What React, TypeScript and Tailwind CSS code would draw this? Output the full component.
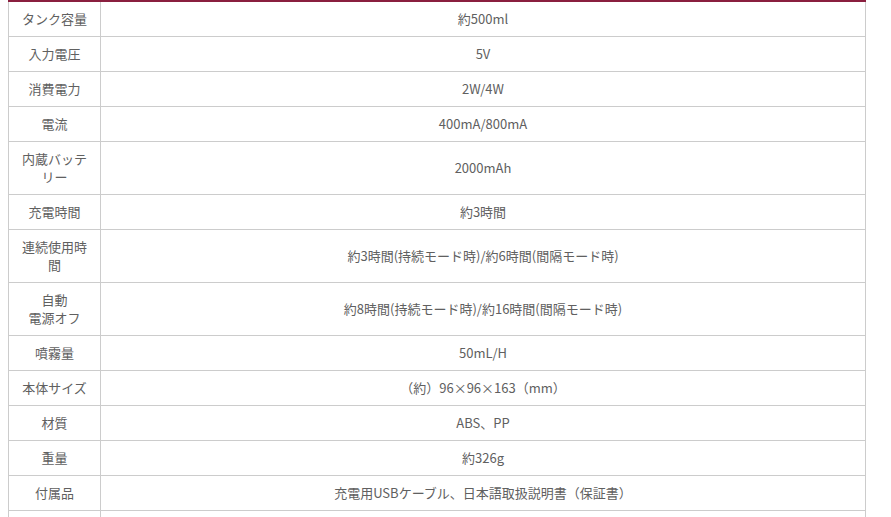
const rows: [string[], string][] = [
  [["タンク容量"], "約500ml"],
  [["入力電圧"], "5V"],
  [["消費電力"], "2W/4W"],
  [["電流"], "400mA/800mA"],
  [["内蔵バッテ", "リー"], "2000mAh"],
  [["充電時間"], "約3時間"],
  [["連続使用時", "間"], "約3時間(持続モード時)/約6時間(間隔モード時)"],
  [["自動", "電源オフ"], "約8時間(持続モード時)/約16時間(間隔モード時)"],
  [["噴霧量"], "50mL/H"],
  [["本体サイズ"], "（約）96×96×163（mm）"],
  [["材質"], "ABS、PP"],
  [["重量"], "約326g"],
  [["付属品"], "充電用USBケーブル、日本語取扱説明書（保証書）"],
];

export default function App() {
  return (
    <div className="h-[517px] w-[891px] overflow-hidden bg-white pl-2 font-['Noto_Sans_CJK_JP','Noto_Sans',sans-serif] text-[13px] leading-[18px] text-[#606060]">
      <table className="w-[858px] border-collapse border-t-2 border-t-[#8a1f3f]">
        <tbody>
          {rows.map(([head, value]) => (
            <tr key={head.join("")}>
              <th className="w-[92px] border border-t-0 border-[#cccccc] px-2 py-2 text-center font-normal">
                {head.map((h) => (
                  <div key={h}>{h}</div>
                ))}
              </th>
              <td className="border border-t-0 border-[#cccccc] px-2 py-2 text-center">{value}</td>
            </tr>
          ))}
          <tr>
            <th className="h-[35px] w-[92px] border border-t-0 border-[#cccccc]" />
            <td className="h-[35px] border border-t-0 border-[#cccccc]" />
          </tr>
        </tbody>
      </table>
    </div>
  );
}
